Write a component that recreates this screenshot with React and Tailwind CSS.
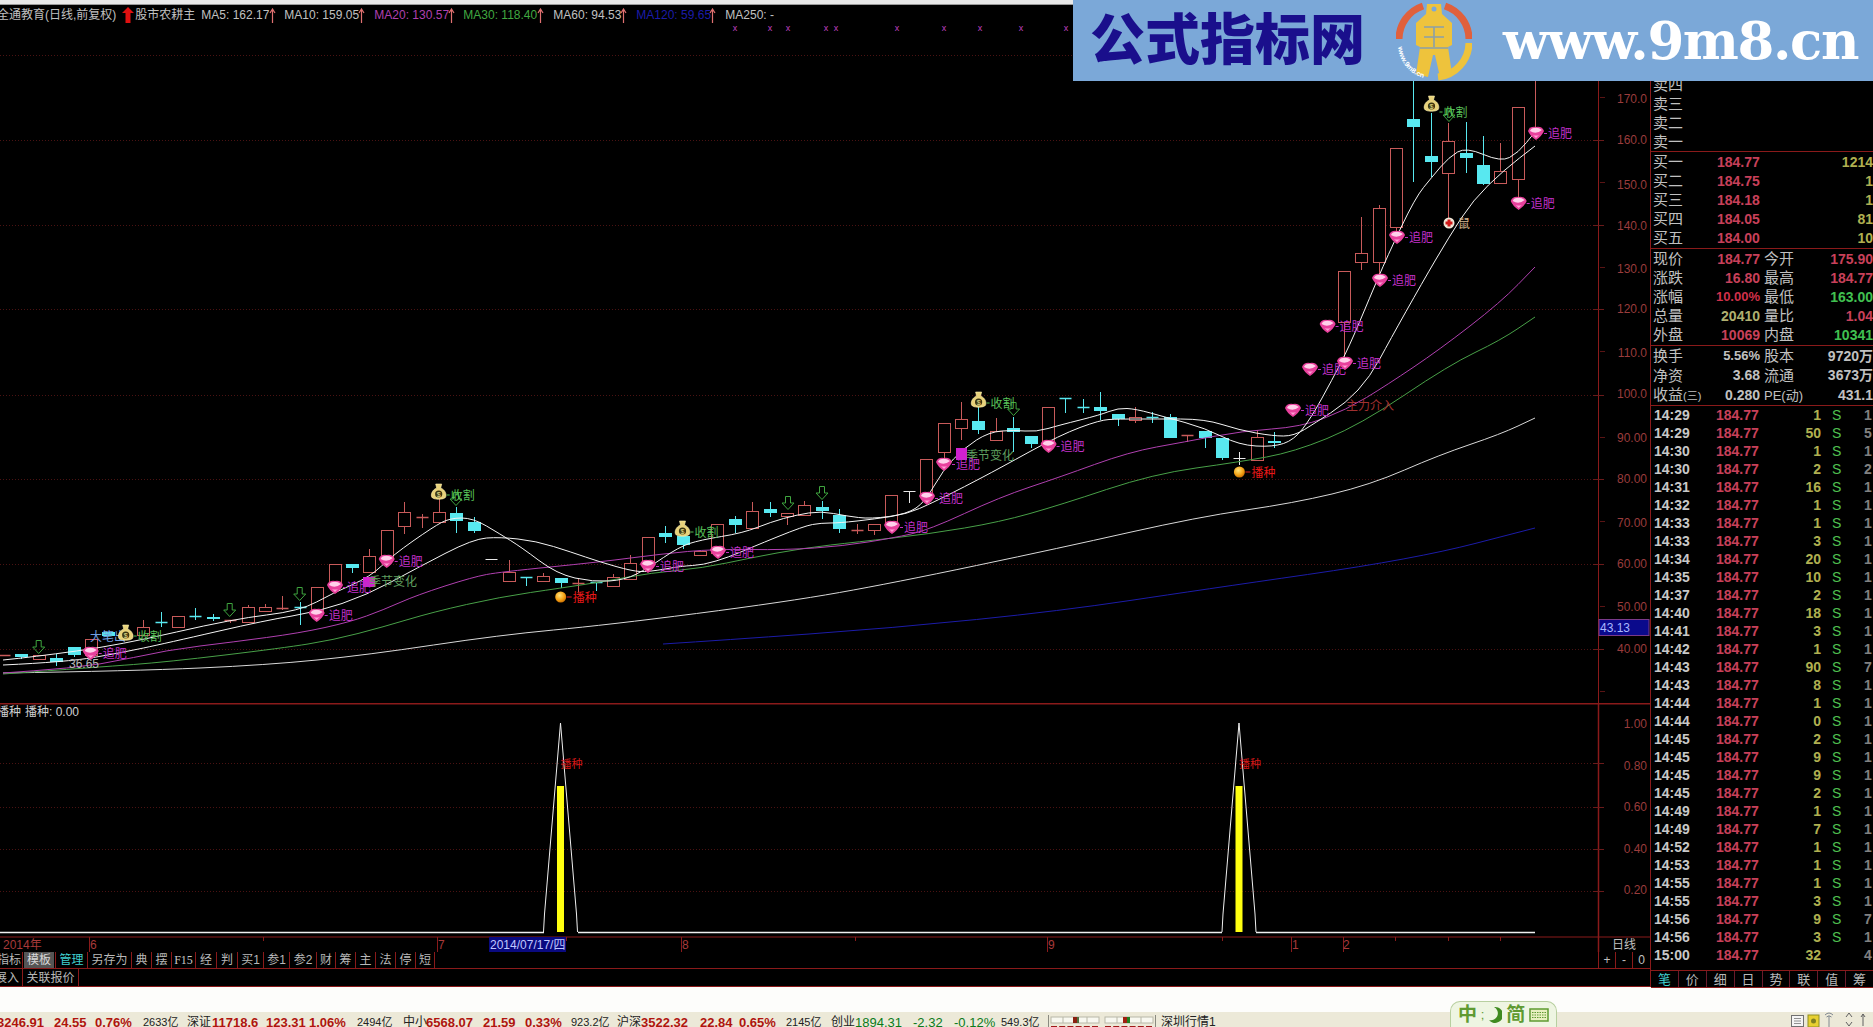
import React from "react";

const ma5 = [[3,660],[33,657],[120,645],[233,619],[300,611],[333,593],[370,577],[393,555],[433,527],[450,518],[473,518],[500,534],[521,547],[557,574],[593,582],[625,580],[648,568],[679,547],[700,540],[743,533],[771,522],[796,515],[821,511],[846,516],[871,519],[907,514],[925,502],[943,470],[964,448],[989,432],[1014,430],[1036,432],[1060,425],[1100,415],[1118,408],[1136,409],[1165,417],[1205,428],[1239,445],[1273,447],[1294,440],[1311,418],[1332,380],[1349,347],[1370,297],[1387,257],[1415,198],[1432,177],[1449,157],[1466,147],[1501,162],[1518,153],[1535,132]];
const ma10 = [[3,665],[67,662],[120,653],[167,643],[267,620],[317,612],[367,595],[417,568],[473,539],[500,537],[536,541],[571,552],[600,562],[632,571],[648,572],[682,566],[703,565],[729,557],[750,548],[804,526],[821,523],[839,523],[875,519],[907,514],[932,503],[964,487],[1000,468],[1060,435],[1100,420],[1118,419],[1156,419],[1205,419],[1239,430],[1273,436],[1294,436],[1315,423],[1346,403],[1370,377],[1390,340],[1422,283],[1449,237],[1473,200],[1504,170],[1535,146]];
const ma20 = [[3,673],[33,671],[100,665],[167,650],[233,642],[300,633],[350,622],[383,610],[417,595],[473,577],[500,572],[600,562],[661,554],[714,549],[786,550],[843,546],[893,538],[929,530],[1000,497],[1060,477],[1129,452],[1184,442],[1242,431],[1301,427],[1346,410],[1387,385],[1439,350],[1501,302],[1535,267]];
const ma30 = [[3,674],[100,667],[167,662],[283,648],[333,640],[383,627],[433,612],[500,597],[561,588],[607,581],[650,573],[703,568],[750,558],[804,548],[857,542],[929,534],[1000,522],[1060,505],[1153,474],[1239,462],[1294,452],[1360,425],[1449,365],[1501,340],[1535,317]];
const ma60 = [[3,673],[133,671],[267,665],[367,655],[500,635],[607,625],[786,602],[893,583],[1060,548],[1198,517],[1294,503],[1370,485],[1439,455],[1501,434],[1535,418]];
const ma120 = [[663,644],[725,640],[893,628],[1060,611],[1200,590],[1415,559],[1535,528]];

// type, body top, body bottom, wick top, wick bottom
const candles = [
  ["r",655,656,655,656],["c",654,657,654,659],["r",655,659,655,659],["c",658,662,654,666],["c",647,655,647,657],["r",639,655,639,655],["c",632,636,632,636],["r",634,636,634,636],["r",627,635,620,635],["c",622,623,612,627],
  ["r",616,627,616,627],["c",616,617,608,620],["c",617,619,614,621],["r",620,621,620,623],["r",607,622,605,622],["r",607,611,604,611],["r",608,609,596,610],["c",607,608,602,625],["r",587,612,587,612],["r",564,583,564,583],
  ["c",564,568,564,573],["r",556,572,549,572],["r",530,557,530,557],["r",512,526,502,534],["r",517,518,514,528],["r",512,522,498,522],["c",513,521,507,533],["c",522,531,517,533],["w",559,560,559,560],["r",572,581,560,581],
  ["c",577,578,577,586],["r",576,581,573,581],["c",578,583,578,588],["r",583,584,578,592],["c",582,583,582,591],["r",577,586,574,586],["r",563,579,555,579],["r",537,565,537,565],["c",533,537,526,543],["c",536,545,536,549],
  ["r",551,555,551,555],["r",524,553,524,553],["c",519,525,516,533],["r",511,528,502,528],["c",509,513,502,517],["r",513,516,513,525],["r",505,515,501,515],["c",507,511,501,519],["c",515,529,509,533],["r",530,531,524,534],
  ["r",524,530,524,535],["r",495,523,495,523],["w",491,492,491,503],["r",459,493,459,493],["r",423,452,423,460],["r",419,428,402,440],["c",421,430,407,434],["r",431,440,418,440],["c",428,432,417,452],["c",436,444,436,448],
  ["r",407,445,407,445],["c",398,399,398,413],["c",407,408,399,413],["c",407,411,392,420],["c",414,419,414,426],["r",417,420,407,423],["c",417,418,412,423],["c",417,438,414,438],["r",435,436,435,442],["c",431,438,431,448],
  ["c",438,458,438,460],["w",458,459,452,465],["r",437,460,430,460],["c",441,443,432,448],null,null,null,["r",271,322,271,362],["r",253,262,217,270],["r",208,262,205,277],
  ["r",148,227,148,233],["c",119,127,81,182],["c",156,162,113,177],["r",141,173,123,220],["c",153,158,122,173],["c",165,184,136,185],["r",171,183,143,183],["r",107,179,107,197],["r",128,129,81,128],
];

const gems = [[90.7,653],[316.7,615],[335,587],[386.7,561],[648,566],[718,552],[892,527],[927,498],[944,464],[1048.6,446],[1293,410],[1310,369],[1327.6,326],[1345,363],[1380,280],[1397,237],[1518.7,203],[1536,133]];
const bags = [[125.7,634],[438.7,493],[682.5,530],[978.6,401],[1431.5,105]];
const downArrows = [[38.7,647],[229.7,610],[299.7,594],[456,499],[788,503],[822,493],[1013.6,409],[1449,115]];
const xMarks = [735,770,788,826,836,897,944,980,1021,1066];
const grid = [55,140,225,309,395,479,564,649];
const axis = [["170.0",99],["160.0",140],["150.0",185],["140.0",226],["130.0",269],["120.0",309],["110.0",353],["100.0",394],["90.00",438],["80.00",479],["70.00",523],["60.00",564],["50.00",607],["40.00",649]];

const pts = (a) => a.map((p) => p.join(",")).join(" ");

// rounds the corners of a hand-read polyline
const smooth = (a) => {
  let d = `M${a[0][0]},${a[0][1]}`;
  for (let i = 1; i < a.length - 1; i++) {
    const mx = (a[i][0] + a[i + 1][0]) / 2;
    const my = (a[i][1] + a[i + 1][1]) / 2;
    d += ` Q${a[i][0]},${a[i][1]} ${mx},${my}`;
  }
  const last = a[a.length - 1];
  return `${d} L${last[0]},${last[1]}`;
};

const Gem = ({ x, y }) => (
  <g transform={`translate(${x} ${y})`}>
    <path d="M-8,-2 Q-6,-7 0,-6 Q6,-7 8,-2 Q6,3 0,7 Q-6,3 -8,-2 Z" fill="#e8409c" />
    <path d="M-6,-2 Q0,2 6,-3 Q2,-6 -2,-5 Q-5,-5 -6,-2 Z" fill="#ffd0ea" />
    <path d="M-3,2 Q0,3 3,2 L0,5 Z" fill="#ff9cd4" />
    <line x1="8" y1={0.5} x2="11" y2={0.5} stroke="#c030c0" />
    <text x="12" y="5" fontSize="12" fill="#c030c8">追肥</text>
  </g>
);

const Bag = ({ x, y, dy = 2 }) => (
  <g transform={`translate(${x} ${y})`}>
    <path d="M-3,-9 L3,-9 L2,-5 C7,-3 8,2 7,4 C6,7 -6,7 -7,4 C-8,2 -7,-3 -2,-5 Z" fill="#e8d27a" stroke="#fff3b0" strokeWidth="0.6" />
    <circle cx="0" cy="1" r="3.6" fill="#3a3410" />
    <text x="0" y="3.6" fontSize="7" fill="#f0e090" textAnchor="middle">$</text>
    <line x1="8" y1={dy} x2="11" y2={dy} stroke="#50c050" />
    <text x="12" y={dy + 5} fontSize="12" fill="#58c058">收割</text>
  </g>
);

const Ball = ({ x, y }) => (
  <g>
    <circle cx={x} cy={y} r="5.5" fill="url(#ball)" />
    <line x1={x + 6} y1={y} x2={x + 11} y2={y} stroke="#e02020" />
    <text x={x + 12} y={y + 5} fontSize="12" fill="#e81818">播种</text>
  </g>
);

const DownArrow = ({ x, y }) => (
  <path
    transform={`translate(${x} ${y})`}
    d="M-2.5,-6.5 H2.5 V0 H6 L0,6.5 L-6,0 H-2.5 Z"
    fill="none"
    stroke="#3fa53f"
    strokeWidth="1"
  />
);

const MainChart = () => (
  <svg className="block" width="1650" height="678" viewBox="0 25 1650 678">
    <defs>
      <radialGradient id="ball" cx="40%" cy="35%" r="70%">
        <stop offset="0%" stopColor="#ffe27a" />
        <stop offset="60%" stopColor="#f5a316" />
        <stop offset="100%" stopColor="#c86a00" />
      </radialGradient>
    </defs>
    {grid.map((y) => (
      <line key={y} x1="0" x2="1598" y1={y + 0.5} y2={y + 0.5} stroke="#4a1212" strokeDasharray="1 2" />
    ))}
    {xMarks.map((x) => (
      <text key={x} x={x} y="31" fontSize="9" fill="#c040c0" textAnchor="middle">x</text>
    ))}
    {candles.map((c, i) => {
      if (!c) return null;
      const x = Math.round(4 + 17.4 * i) + 0.5;
      const color = c[0] === "r" ? "#c85a5a" : c[0] === "c" ? "#58e8f0" : "#e8e8e8";
      const flat = c[2] - c[1] <= 1;
      return (
        <g key={i}>
          <line x1={x} x2={x} y1={c[3]} y2={c[4]} stroke={color} />
          {flat ? (
            <line x1={x - 6} x2={x + 6} y1={c[1] + 0.5} y2={c[1] + 0.5} stroke={color} strokeWidth={c[0] === "w" ? 1 : 1.5} />
          ) : c[0] === "r" ? (
            <rect x={x - 6} y={c[1] + 0.5} width="12" height={c[2] - c[1]} fill="#000" stroke={color} />
          ) : (
            <rect x={x - 6.5} y={c[1]} width="13" height={c[2] - c[1]} fill={color} />
          )}
        </g>
      );
    })}
    <path d={smooth(ma120)} fill="none" stroke="#1c1ca8" />
    <path d={smooth(ma60)} fill="none" stroke="#d8d8d8" />
    <path d={smooth(ma30)} fill="none" stroke="#48a048" />
    <path d={smooth(ma20)} fill="none" stroke="#b040b0" />
    <path d={smooth(ma10)} fill="none" stroke="#f4f4f4" />
    <path d={smooth(ma5)} fill="none" stroke="#f4f4f4" />

    <text x="90" y="641" fontSize="12" fill="#6f9fe0">大笔出</text>
    <text x="69" y="668" fontSize="12" fill="#b8b8b8">36.65</text>
    <rect x="363" y="577" width="12" height="10" fill="#d020d0" />
    <text x="369" y="586" fontSize="12" fill="#5f9f5f">季节变化</text>
    <rect x="956" y="448" width="11" height="12" fill="#d020d0" />
    <text x="966" y="460" fontSize="12" fill="#5f9f5f">季节变化</text>
    <text x="1346" y="410" fontSize="12" fill="#a03030">主力介入</text>

    {downArrows.map((a, i) => (
      <DownArrow key={i} x={a[0]} y={a[1]} />
    ))}
    {gems.map((g, i) => (
      <Gem key={i} x={g[0]} y={g[1]} />
    ))}
    {bags.map((b, i) => (
      <Bag key={i} x={b[0]} y={b[1]} dy={i === 4 ? 7 : 2} />
    ))}
    <Ball x={560.7} y={597} />
    <Ball x={1239.4} y={472} />
    <circle cx="1449" cy="223" r="5.5" fill="#f0e8d8" />
    <path d="M1447.5,219.5 h3 v2 h2 v3 h-2 v2 h-3 v-2 h-2 v-3 h2 Z" fill="#d01818" />
    <text x="1458" y="228" fontSize="12" fill="#d8b890">鼠</text>

    <line x1="1598.5" x2="1598.5" y1="25" y2="703" stroke="#8a1a1a" />
    {grid.map((y) => (
      <g key={y}>
        <line x1="1593" x2="1604" y1={y + 0.5} y2={y + 0.5} stroke="#6a1a1a" />
        <line x1="1600" x2="1605" y1={y + 42.5} y2={y + 42.5} stroke="#5a1414" />
      </g>
    ))}
    {axis.map(([t, y]) => (
      <text key={t} x="1647" y={y + 4} fontSize="12" fill="#9a3c3c" textAnchor="end">{t}</text>
    ))}
    <rect x="1599" y="619.5" width="50" height="16" fill="#0a0a8c" stroke="#7a3a8a" />
    <text x="1600" y="632" fontSize="12" fill="#a8b8ff">43.13</text>
  </svg>
);

const peak = (x) => [[x - 17, 932], [x - 16, 914], [x, 723], [x + 16, 914], [x + 17, 932]];
const subGrid = [763, 807, 849, 891];
const subAxis = [["1.00", 724], ["0.80", 766], ["0.60", 807], ["0.40", 849], ["0.20", 890]];
const dates = [[3, "2014年"], [90, "6"], [438, "7"], [682, "8"], [1048, "9"], [1292, "1"], [1343, "2"]];
const dateTicks = [89, 263, 437, 489, 566, 681, 855, 1047, 1222, 1291, 1343, 1395, 1448, 1500];

const SubChart = () => (
  <svg className="block" width="1650" height="249" viewBox="0 703 1650 249">
    <line x1="0" x2="1650" y1="703.5" y2="703.5" stroke="#8a1a1a" strokeWidth="2" />
    {subGrid.map((y) => (
      <line key={y} x1="0" x2="1598" y1={y + 0.5} y2={y + 0.5} stroke="#4a1212" strokeDasharray="1 2" />
    ))}
    <text x="-3" y="716" fontSize="12" fill="#d0d0d0">播种</text>
    <text x="25" y="716" fontSize="12" fill="#d0d0d0">播种: 0.00</text>
    {[560.5, 1239].map((x) => (
      <g key={x}>
        <rect x={x - 3.5} y="786" width="7" height="146" fill="#ffff10" />
        <polyline points={pts(peak(x))} fill="none" stroke="#f0f0f0" strokeWidth="1" />
        <text x={x} y="768" fontSize="11" fill="#d81818">播种</text>
      </g>
    ))}
    <line x1="0" x2="544" y1="932.5" y2="932.5" stroke="#f0f0f0" strokeWidth="1.5" />
    <line x1="578" x2="1222" y1="932.5" y2="932.5" stroke="#f0f0f0" strokeWidth="1.5" />
    <line x1="1256" x2="1535" y1="932.5" y2="932.5" stroke="#f0f0f0" strokeWidth="1.5" />
    <line x1="1598.5" x2="1598.5" y1="703" y2="952" stroke="#8a1a1a" strokeWidth="1.5" />
    {subGrid.map((y) => (
      <line key={y} x1="1593" x2="1604" y1={y + 0.5} y2={y + 0.5} stroke="#6a1a1a" />
    ))}
    {subAxis.map(([t, y]) => (
      <text key={t} x="1647" y={y + 4} fontSize="12" fill="#9a3c3c" textAnchor="end">{t}</text>
    ))}
    <line x1="0" x2="1650" y1="937" y2="937" stroke="#8a1a1a" />
    {dateTicks.map((x) => (
      <line key={x} x1={x + 0.5} x2={x + 0.5} y1="937" y2={x === 89 || x === 437 || x === 681 || x === 1047 || x === 1291 || x === 1343 ? 952 : 941} stroke="#8a1a1a" />
    ))}
    {dates.map(([x, t]) => (
      <text key={t} x={x} y="949" fontSize="12" fill="#a83a3a">{t}</text>
    ))}
    <rect x="489" y="937" width="77" height="15" fill="#0a0a80" />
    <text x="490" y="949" fontSize="12" fill="#c0c8ff">2014/07/17/四</text>
    <text x="1612" y="949" fontSize="12" fill="#c0c0c0">日线</text>
  </svg>
);

const toolTabs = [
  { t: "指标", w: "w-[23px] justify-end pr-[1px]" },
  { t: "模板", w: "w-[33px] justify-end pr-[1px]", c: "text-[#d8d8d8]", bg: true },
  { t: "管理", w: "w-[32px] justify-center", c: "text-[#40d0d0]" },
  { t: "另存为", w: "w-[44px] justify-center" },
  { t: "典", w: "w-[20px] justify-center" },
  { t: "摆", w: "w-[20px] justify-center" },
  { t: "F15", w: "w-[24px] justify-center", c: "font-['Liberation_Serif'] text-[#c8c8c8]" },
  { t: "经", w: "w-[21px] justify-center" },
  { t: "判", w: "w-[21px] justify-center" },
  { t: "买1", w: "w-[26px] justify-center" },
  { t: "参1", w: "w-[26px] justify-center" },
  { t: "参2", w: "w-[27px] justify-center" },
  { t: "财", w: "w-[19px] justify-center" },
  { t: "筹", w: "w-[20px] justify-center" },
  { t: "主", w: "w-[20px] justify-center" },
  { t: "法", w: "w-[20px] justify-center" },
  { t: "停", w: "w-[20px] justify-center" },
  { t: "短", w: "w-[19px] justify-center" },
];

const Toolbar = () => (
  <>
    <div className="flex h-[17px] w-[1650px] border-b border-[#8a1a1a]">
      <div className="flex w-[1598px]">
        {toolTabs.map((tab) => (
          <div key={tab.t} className={`flex shrink-0 items-center overflow-hidden border-r border-[#8a1a1a] text-[12px] leading-none whitespace-nowrap ${tab.w} ${tab.c || "text-[#b8b8b8]"}`}>
            {tab.bg ? <span className="flex h-full items-center bg-[#555555] px-[3px]">{tab.t}</span> : tab.t}
          </div>
        ))}
      </div>
      <div className="flex w-[52px] border-l border-[#8a1a1a] text-[12px] leading-none text-[#c0c0c0]">
        <div className="flex w-[17px] items-center justify-center border-r border-[#8a1a1a]">+</div>
        <div className="flex w-[17px] items-center justify-center border-r border-[#8a1a1a]">-</div>
        <div className="flex flex-1 items-center justify-center">0</div>
      </div>
    </div>
    <div className="flex h-[18px] w-[1650px] overflow-hidden border-b border-[#8a1a1a] text-[12px] leading-none text-[#b8b8b8]">
      <div className="flex w-[23px] shrink-0 items-center justify-end border-r border-[#8a1a1a] pr-[3px] whitespace-nowrap">展入</div>
      <div className="flex w-[56px] shrink-0 items-center justify-center border-r border-[#8a1a1a] whitespace-nowrap">关联报价</div>
    </div>
  </>
);

const Up = ({ className }) => (
  <svg className={className} width="7" height="15" viewBox="0 0 7 15">
    <path d="M3.5,15 V1 M1,5 L3.5,1 L6,5" fill="none" stroke="#e07070" strokeWidth="1.2" />
  </svg>
);

const Header = () => (
  <div className="flex h-[20px] w-[1073px] items-center overflow-hidden text-[12px] leading-none whitespace-nowrap text-[#c0c0c0]">
    <span className="-ml-[3px]">全通教育(日线,前复权)</span>
    <svg className="ml-[6px]" width="12" height="16" viewBox="0 0 12 16">
      <path d="M6,0 L12,6 H8.5 V16 H3.5 V6 H0 Z" fill="#e01010" />
    </svg>
    <span className="ml-[1px]">股市农耕主</span>
    <span className="ml-[6px] w-[68px]">MA5: 162.17</span>
    <Up />
    <span className="ml-[8px] w-[74px]">MA10: 159.05</span>
    <Up />
    <span className="ml-[9px] w-[74px] text-[#b040b0]">MA20: 130.57</span>
    <Up />
    <span className="ml-[8px] w-[74px] text-[#40a840]">MA30: 118.40</span>
    <Up />
    <span className="ml-[9px] w-[67px]">MA60: 94.53</span>
    <Up />
    <span className="ml-[9px] w-[73px] text-[#1c1ca8]">MA120: 59.65</span>
    <Up />
    <span className="ml-[9px]">MA250: -</span>
  </div>
);

const redV = "text-[14px] text-[#c8405a]";
const pctV = "text-[13px] text-[#d0304a]";
const greenV = "text-[14px] text-[#40c050]";
const tanV = "text-[14px] text-[#b0b070]";
const grayV = "text-[14px] text-[#c0c0c0]";
const grayPct = "text-[13px] text-[#c0c0c0]";

const quoteRows = [
  ["现价", "184.77", redV, "今开", "175.90", redV],
  ["涨跌", "16.80", redV, "最高", "184.77", redV],
  ["涨幅", "10.00%", pctV, "最低", "163.00", greenV],
  ["总量", "20410", tanV, "量比", "1.04", redV],
  ["外盘", "10069", redV, "内盘", "10341", greenV],
];
const infoRows = [
  ["换手", "5.56%", grayPct, "股本", "9720万", grayV],
  ["净资", "3.68", grayV, "流通", "3673万", grayV],
  [<>收益<span className="text-[11px]">(三)</span></>, "0.280", grayV, <span className="text-[13px]">PE(动)</span>, "431.1", grayV],
];

const ticks = [
  ["14:29",1,1],["14:29",50,5],["14:30",1,1],["14:30",2,2],["14:31",16,1],["14:32",1,1],["14:33",1,1],["14:33",3,1],["14:34",20,1],["14:35",10,1],
  ["14:37",2,1],["14:40",18,1],["14:41",3,1],["14:42",1,1],["14:43",90,7],["14:43",8,1],["14:44",1,1],["14:44",0,1],["14:45",2,1],["14:45",9,1],
  ["14:45",9,1],["14:45",2,1],["14:49",1,1],["14:49",7,1],["14:52",1,1],["14:53",1,1],["14:55",1,1],["14:55",3,1],["14:56",9,7],["14:56",3,1],["15:00",32,4],
];

const QuoteRow = ({ r, rowH }) => (
  <div className={`flex items-center pl-[2px] ${rowH}`}>
    <span className="w-[60px] shrink-0 text-[15px] leading-none whitespace-nowrap text-[#c0c0c0]">{r[0]}</span>
    <span className={`w-[47px] shrink-0 text-right leading-none font-bold whitespace-nowrap ${r[2]}`}>{r[1]}</span>
    <span className="ml-[4px] w-[46px] shrink-0 text-[15px] leading-none whitespace-nowrap text-[#c0c0c0]">{r[3]}</span>
    <span className={`flex-1 text-right leading-none font-bold whitespace-nowrap ${r[5]}`}>{r[4]}</span>
  </div>
);

const panelTabs = ["笔", "价", "细", "日", "势", "联", "值", "筹"];

const SidePanel = () => (
  <div className="flex w-[223px] shrink-0 flex-col border-l border-[#8a1a1a]">
    <div className="h-[70px] shrink-0" />
    <div className="h-[77px] shrink-0 border-b border-[#8a1a1a] pl-[2px] text-[15px] leading-[19px] text-[#c0c0c0]">
      <div>卖四</div>
      <div>卖三</div>
      <div>卖二</div>
      <div>卖一</div>
    </div>
    <div className="h-[97px] shrink-0 border-b border-[#8a1a1a]">
      {[["买一","184.77","1214"],["买二","184.75","1"],["买三","184.18","1"],["买四","184.05","81"],["买五","184.00","10"]].map((r) => (
        <div key={r[0]} className="flex h-[19px] items-center pl-[2px]">
          <span className="w-[64px] text-[15px] leading-none text-[#c0c0c0]">{r[0]}</span>
          <span className="w-[44px] text-[14px] leading-none font-bold text-[#c8405a]">{r[1]}</span>
          <span className="flex-1 text-right text-[14px] leading-none font-bold text-[#b0b050]">{r[2]}</span>
        </div>
      ))}
    </div>
    <div className="h-[97px] shrink-0 border-b border-[#8a1a1a]">
      {quoteRows.map((r) => (
        <QuoteRow key={r[0]} r={r} rowH="h-[19px]" />
      ))}
    </div>
    <div className="h-[60px] shrink-0 border-b border-[#8a1a1a]">
      {infoRows.map((r, i) => (
        <QuoteRow key={i} r={r} rowH="h-[19.6px]" />
      ))}
    </div>
    <div className="h-[564px] shrink-0 overflow-hidden">
      {ticks.map((r, i) => (
        <div key={i} className="flex h-[18px] items-center text-[14px] leading-none font-bold">
          <span className="ml-[3px] w-[62px] text-[#c8c8c8]">{r[0]}</span>
          <span className="w-[60px] text-[#c8405a]">184.77</span>
          <span className="w-[45px] text-right text-[#b0b050]">{r[1]}</span>
          <span className="ml-[11px] w-[32px] font-normal text-[#50c050]">{r[0] === "15:00" ? "" : "S"}</span>
          <span className="text-[#808080]">{r[2]}</span>
        </div>
      ))}
    </div>
    <div className="flex h-[18px] shrink-0 border-t border-b border-[#8a1a1a]">
      {panelTabs.map((t, i) => (
        <div key={t} className={`flex flex-1 items-center justify-center border-r border-[#6a1a2a] text-[13px] leading-none last:border-r-0 ${i === 0 ? "text-[#40d0d0]" : "text-[#b8b8b8]"}`}>
          {t}
        </div>
      ))}
    </div>
  </div>
);

const Logo = () => (
  <svg className="ml-[30px] shrink-0" width="76" height="80" viewBox="0 0 76 80">
    <path d="M3,38 A35,35 0 0 1 27,5" fill="none" stroke="#e0603c" strokeWidth="7" />
    <path d="M73,38 A35,35 0 0 0 49,5" fill="none" stroke="#e0603c" strokeWidth="7" />
    <path d="M73,42 A35,35 0 0 1 42,76" fill="none" stroke="#eec33c" strokeWidth="7" />
    <path d="M31,3 H45 L46,13 L56,22 V44 L52,46 L56,73 L44,76 L39,54 H37 L32,76 L20,73 L24,46 L20,44 V22 L30,13 Z" fill="#eec33c" />
    <circle cx="38" cy="8" r="2.5" fill="#7ba8d8" />
    <path d="M28,26 H48 M28,36 H48 M38,26 V46 M24,47 H52" stroke="#8aa0a8" strokeWidth="1.6" fill="none" />
    <path id="logoArc" d="M2,46 A36,36 0 0 0 27,77" fill="none" />
    <text fontSize="7" fill="#ffffff" fontWeight="700">
      <textPath href="#logoArc">www.9m8.cn</textPath>
    </text>
  </svg>
);

const Banner = () => (
  <div className="absolute top-0 right-0 z-10 flex h-[81px] w-[800px] items-center overflow-hidden bg-[#7ba8d8]">
    <span className="ml-[17px] w-[276px] shrink-0 text-[55px] leading-none font-black whitespace-nowrap text-[#1a0f8c]">公式指标网</span>
    <Logo />
    <span className="ml-[31px] font-['DejaVu_Serif',serif] text-[53px] leading-none font-bold tracking-[-1.4px] whitespace-nowrap text-white">www.9m8.cn</span>
  </div>
);

const redS = "text-[13px] font-bold text-[#b0140e]";
const greenS = "text-[13px] text-[#0a7a1a]";
const plainS = "text-[11px]";
const nameS = "text-[12px]";

const statusItems = [
  { t: "3246.91", c: `w-[57px] ${redS}` },
  { t: "24.55", c: `w-[41px] ${redS}` },
  { t: "0.76%", c: `w-[48px] ${redS}` },
  { t: "2633亿", c: `w-[44px] ${plainS}` },
  { t: "深证", c: `w-[25px] ${nameS}` },
  { t: "11718.6", c: `w-[54px] ${redS}` },
  { t: "123.31", c: `w-[43px] ${redS}` },
  { t: "1.06%", c: `w-[48px] ${redS}` },
  { t: "2494亿", c: `w-[46px] ${plainS}` },
  { t: "中小", c: `w-[23px] ${nameS}` },
  { t: "6568.07", c: `w-[57px] ${redS}` },
  { t: "21.59", c: `w-[42px] ${redS}` },
  { t: "0.33%", c: `w-[46px] ${redS}` },
  { t: "923.2亿", c: `w-[46px] ${plainS}` },
  { t: "沪深", c: `w-[24px] ${nameS}` },
  { t: "3522.32", c: `w-[59px] ${redS}` },
  { t: "22.84", c: `w-[39px] ${redS}` },
  { t: "0.65%", c: `w-[47px] ${redS}` },
  { t: "2145亿", c: `w-[45px] ${plainS}` },
  { t: "创业", c: `w-[24px] ${nameS}` },
  { t: "1894.31", c: `w-[58px] ${greenS}` },
  { t: "-2.32", c: `w-[41px] ${greenS}` },
  { t: "-0.12%", c: `w-[47px] ${greenS}` },
  { t: "549.3亿", c: `w-[47px] ${plainS}` },
];

const IndicatorBox = () => (
  <svg className="shrink-0" width="108" height="15" viewBox="0 0 108 15">
    <rect x="0" y="0" width="1" height="15" fill="#8a8a80" />
    <rect x="107" y="0" width="1" height="15" fill="#8a8a80" />
    {[3, 57].map((x) => (
      <g key={x}>
        <rect x={x} y="2" width="48" height="6" fill="#f8f8f0" stroke="#b8b8a8" />
        <line x1={x + 12} x2={x + 12} y1="2" y2="8" stroke="#b8b8a8" />
        <line x1={x + 36} x2={x + 36} y1="2" y2="8" stroke="#b8b8a8" />
        {[0, 1, 2, 3, 4, 5].map((k) => (
          <rect key={k} x={x + k * 8.2} y="11" width="6" height="4" fill="#a01818" />
        ))}
      </g>
    ))}
    <rect x="25" y="2" width="4" height="6" fill="#8a2010" />
    <rect x="29" y="2" width="2" height="6" fill="#507040" />
    <rect x="75" y="2" width="4" height="6" fill="#a02010" />
    <rect x="79" y="2" width="3" height="6" fill="#208020" />
  </svg>
);

const ImeBar = () => (
  <div className="absolute bottom-0 left-[1450px] z-10 flex h-[26px] w-[107px] items-center justify-between rounded-t-[10px] border border-b-0 border-[#b8cfa0] bg-[#eef5e2] px-[7px] text-[#5f9a32]">
    <span className="text-[19px] leading-none font-bold">中</span>
    <span className="text-[13px] leading-none">;</span>
    <svg width="14" height="18" viewBox="0 0 14 18">
      <path d="M6,1 A8,8 0 1 1 1,14 A7,7 0 0 0 6,1 Z" fill="#3f8a20" />
    </svg>
    <span className="text-[19px] leading-none font-bold">简</span>
    <svg width="20" height="14" viewBox="0 0 20 14">
      <rect x="1" y="1" width="18" height="12" fill="#e8f0c0" stroke="#5f9a32" strokeWidth="1.5" />
      <path d="M3,4.5 H17 M3,7 H17 M3,9.5 H17" stroke="#5f9a32" strokeDasharray="1.5 1" />
    </svg>
  </div>
);

const Tray = () => (
  <svg className="absolute right-[6px] bottom-0" width="76" height="15" viewBox="0 0 76 15">
    <rect x="0.5" y="3.5" width="12" height="11" fill="#f4f4f4" stroke="#707070" />
    <path d="M3,6.5 H10 M3,9 H10 M3,11.5 H10" stroke="#909090" />
    <rect x="17" y="3" width="11" height="12" fill="#e8d030" stroke="#909020" />
    <circle cx="22.5" cy="9" r="2.5" fill="#808020" />
    <path d="M38,15 V4 M34,3 Q38,-1 42,3 M35.5,5 Q38,2.5 40.5,5" fill="none" stroke="#808890" />
    <path d="M55,5 L58,1 L61,5 M55,10 L58,14 L61,10" fill="none" stroke="#606060" />
    <path d="M72,2 V14 M70,5 L72,2 L74,5" fill="none" stroke="#606060" />
  </svg>
);

const StatusBar = () => (
  <div className="relative h-[15px] w-full overflow-hidden bg-[#ece9d8]">
    <div className="-ml-[3px] flex h-[20px] items-center leading-none whitespace-nowrap text-[#222222]">
      {statusItems.map((s) => (
        <span key={s.t} className={`shrink-0 ${s.c}`}>{s.t}</span>
      ))}
      <IndicatorBox />
      <span className="ml-[5px] text-[12px]">深圳行情1</span>
    </div>
    <Tray />
  </div>
);

export default function App() {
  return (
    <div className="relative h-[1027px] w-[1873px] overflow-hidden bg-black font-['Liberation_Sans','Noto_Sans_CJK_SC',sans-serif]">
      <Banner />
      <div className="h-[5px] border-b border-[#9a9a9a] bg-[#e8e8e8]" />
      <div className="flex h-[982px]">
        <div className="w-[1650px] shrink-0">
          <Header />
          <MainChart />
          <SubChart />
          <Toolbar />
        </div>
        <SidePanel />
      </div>
      <div className="h-[25px] bg-[#fdfdfb]" />
      <StatusBar />
      <ImeBar />
    </div>
  );
}
